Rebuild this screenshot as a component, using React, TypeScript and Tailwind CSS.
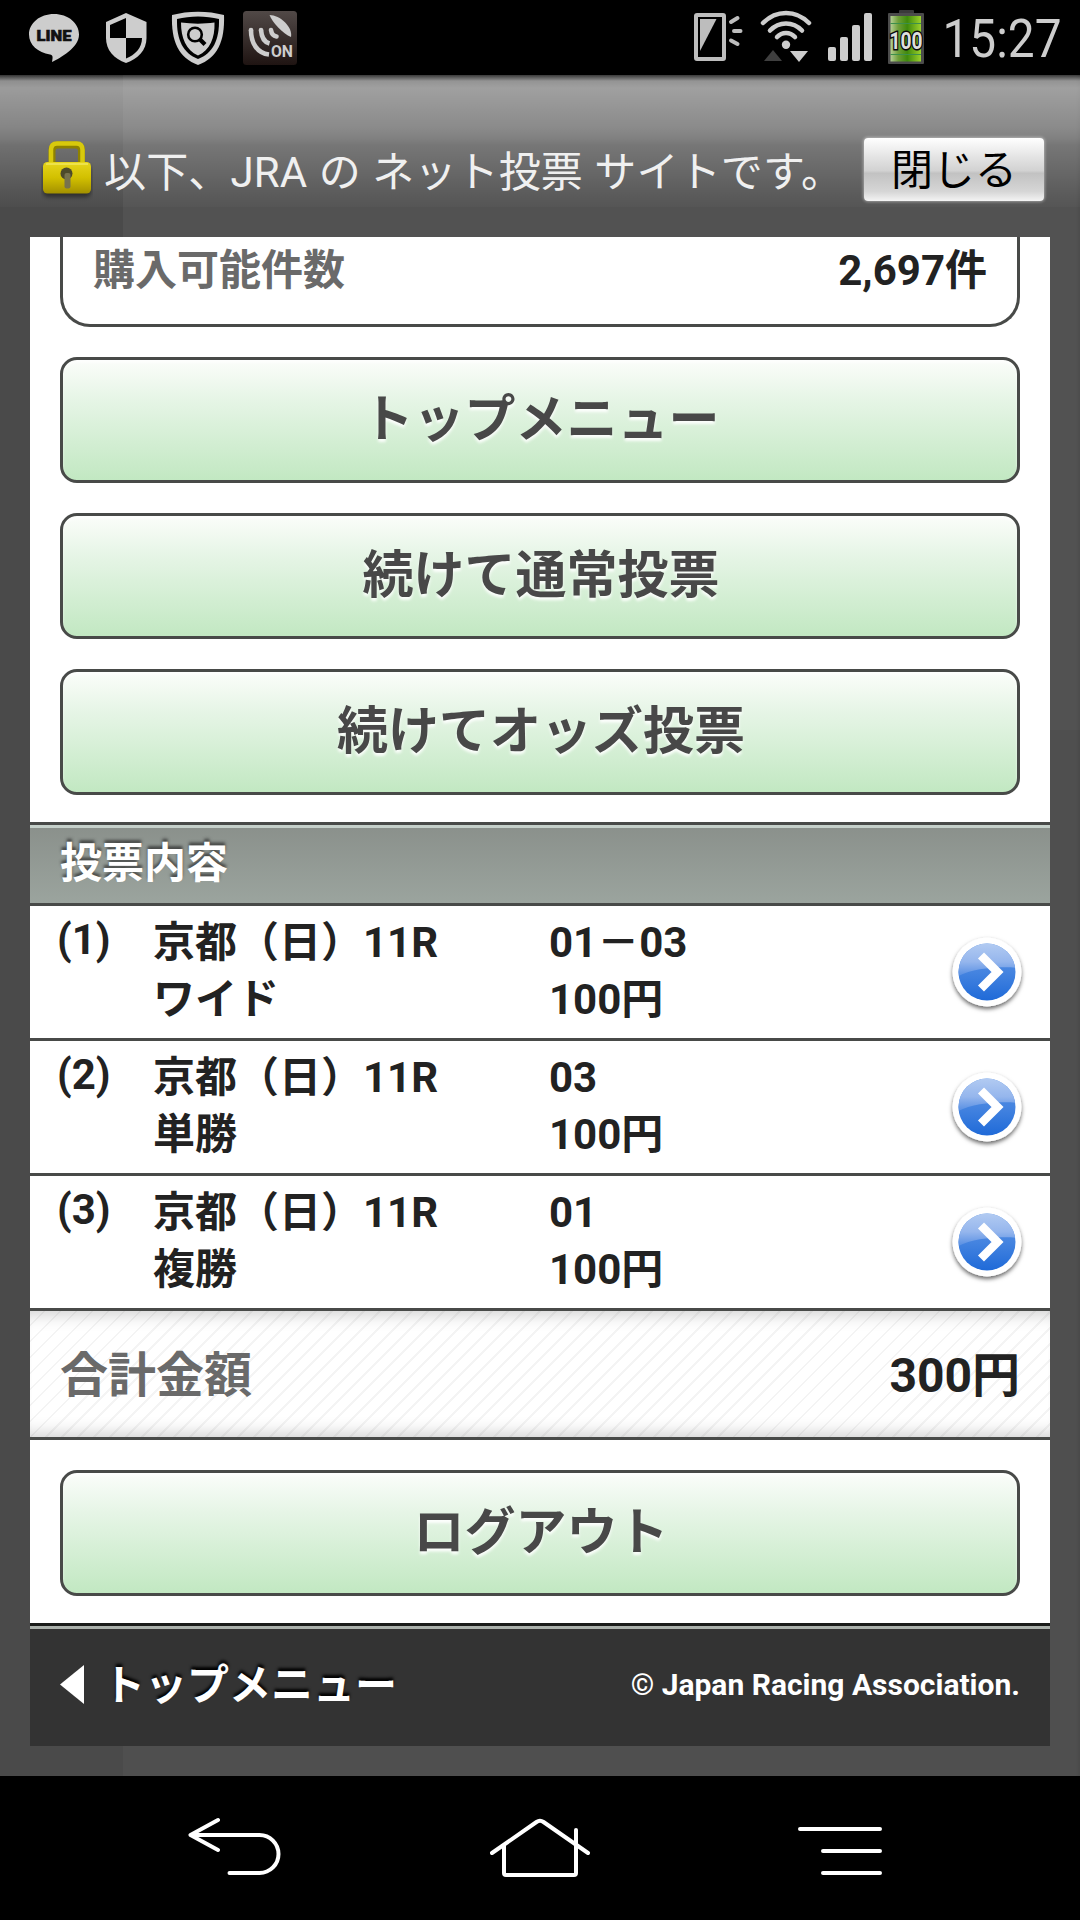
import type { ReactNode } from "react";

interface Bet {
  no: number;
  race: string;
  type: string;
  numbers: string;
  amount: string;
}

const bets: Bet[] = [
  { no: 1, race: "京都（日）11R", type: "ワイド", numbers: "01－03", amount: "100円" },
  { no: 2, race: "京都（日）11R", type: "単勝", numbers: "03", amount: "100円" },
  { no: 3, race: "京都（日）11R", type: "複勝", numbers: "01", amount: "100円" },
];

function LineIcon() {
  return (
    <svg className="h-[75px] w-[52px]" viewBox="28 0 52 75">
      <path
        fill="#cdcdcd"
        d="M54 14C40 14 29 23 29 34.500C29 45 38 52.500 50 54.500C53 55 53 57 52 62C60 58 79 48 79 34.500C79 23 68 14 54 14Z"
      />
      <text x="36.5" y="41" fontSize="15.5" fontWeight="900" fill="#111" stroke="#111" strokeWidth="0.6" textLength="35" lengthAdjust="spacingAndGlyphs">
        LINE
      </text>
    </svg>
  );
}

function ShieldIcon() {
  return (
    <svg className="h-[75px] w-[42px]" viewBox="105 0 42 75">
      <path fill="#cdcdcd" d="M126 13L146.500 22V38C146.500 50 138 59 126 63C114 59 106 50 106 38V22Z" />
      <path fill="#000" d="M126 18V38H110V25Z" />
      <path fill="#000" d="M126 38H142C142 48 135 55 126 58.500Z" />
    </svg>
  );
}

function ScanIcon() {
  return (
    <svg className="h-[75px] w-[54px]" viewBox="171 0 54 75">
      <path fill="#cdcdcd" d="M172 15C188 10.500 208 10.500 224 15C225 42 217 58 198 65C179 58 171 42 172 15Z" />
      <path fill="#000" d="M177 19C190 15.500 206 15.500 219 19C219.500 40 213 53 198 59C183 53 176.500 40 177 19Z" />
      <path fill="#cdcdcd" d="M181 22.500C192 24 204 24 214.500 22.500C215 38 210 50 198 55.500C186 50 181 38 181 22.500Z" />
      <circle cx="195" cy="34.500" r="6.800" fill="none" stroke="#000" strokeWidth="2.600" />
      <path d="M199.500 39L205 44.500" stroke="#000" strokeWidth="4.200" />
    </svg>
  );
}

function SignalOnIcon() {
  return (
    <svg className="h-[75px] w-[56px]" viewBox="242 0 56 75">
      <defs>
        <linearGradient id="tile" x1="0" y1="0" x2="0" y2="1">
          <stop offset="0" stopColor="#514947" />
          <stop offset="1" stopColor="#1f1412" />
        </linearGradient>
      </defs>
      <rect x="243" y="11" width="54" height="54" rx="3.500" fill="url(#tile)" />
      <path fill="#cdcdcd" d="M269.500 15C280 15 293 27 291 37C283 34 272 22 269.500 15Z" />
      <g fill="none" stroke="#cdcdcd" strokeWidth="4.600">
        <path d="M251 30C251 43 257 53 269 54.500" />
        <path d="M261 30C261.500 37 264 42 269.500 43.500" />
        <path d="M271 30C271.500 33.500 273 36 276.500 36.500" strokeLinecap="round" />
      </g>
      <circle cx="251" cy="30" r="2.300" fill="#cdcdcd" />
      <circle cx="261" cy="30" r="2.300" fill="#cdcdcd" />
      <text x="271" y="57" fontSize="16.500" fontWeight="700" fill="#cdcdcd" textLength="22" lengthAdjust="spacingAndGlyphs">
        ON
      </text>
    </svg>
  );
}

function PhoneGlanceIcon() {
  return (
    <svg className="h-[75px] w-[50px]" viewBox="693 0 50 75">
      <rect x="696" y="15" width="28" height="44" rx="1" fill="none" stroke="#bdbdbd" strokeWidth="4" />
      <path fill="#bdbdbd" d="M700 19H716.500L700 51Z" />
      <path d="M731 22L737.500 18M734 31H740.500M731 40.500L737.500 44" stroke="#bdbdbd" strokeWidth="4" strokeLinecap="round" />
    </svg>
  );
}

function WifiIcon() {
  return (
    <svg className="h-[75px] w-[54px]" viewBox="759 0 54 75">
      <g fill="none" stroke="#cdcdcd" strokeWidth="4.500" strokeLinecap="round">
        <path d="M763 23C776 9.500 796 9.500 809 23" />
        <path d="M770 30.500C779 21 793 21 802 30.500" />
        <path d="M777 37C782 31.500 790 31.500 795 37" />
      </g>
      <circle cx="786" cy="44.700" r="4.200" fill="#cdcdcd" />
      <path d="M764 61H782L773 50Z" fill="#3f3f3f" />
      <path d="M790 51H808L799 62Z" fill="#cdcdcd" />
    </svg>
  );
}

function SignalBars() {
  return (
    <div className="flex h-[75px] items-end gap-1 pb-[14px]">
      <span className="h-[14px] w-2 rounded-[2px] bg-[#cdcdcd]" />
      <span className="h-[24px] w-2 rounded-[2px] bg-[#cdcdcd]" />
      <span className="h-[36px] w-2 rounded-[2px] bg-[#cdcdcd]" />
      <span className="h-[48px] w-2 rounded-[2px] bg-[#cdcdcd]" />
    </div>
  );
}

function BatteryIcon() {
  return (
    <svg className="h-[75px] w-[38px] overflow-visible" viewBox="887 0 38 75">
      <defs>
        <linearGradient id="cell" x1="0" y1="0" x2="1" y2="0">
          <stop offset="0" stopColor="#b5cf95" />
          <stop offset="0.250" stopColor="#6f9f3a" />
          <stop offset="0.550" stopColor="#3f8a0c" />
          <stop offset="1" stopColor="#9bd12c" />
        </linearGradient>
      </defs>
      <rect x="899" y="10" width="15" height="5" rx="1" fill="#3a3a3a" />
      <rect x="888" y="13" width="36" height="51" rx="1" fill="#4b4b4b" />
      <rect x="890.500" y="16" width="30.500" height="45.500" fill="url(#cell)" />
      <path d="M890.500 23.500H921M890.500 54.500H921" stroke="#3c8f4c" />
      <text
        x="889.500"
        y="49"
        fontSize="24"
        fontWeight="700"
        fill="#dedede"
        stroke="#0b0b0b"
        strokeWidth="3"
        paintOrder="stroke"
        textLength="33"
        lengthAdjust="spacingAndGlyphs"
      >
        100
      </text>
    </svg>
  );
}

function LockIcon() {
  return (
    <svg className="h-[66px] w-[52px]" viewBox="41 138 52 66">
      <defs>
        <linearGradient id="lock" x1="0" y1="0" x2="0" y2="1">
          <stop offset="0" stopColor="#e6d51c" />
          <stop offset="0.500" stopColor="#d2c000" />
          <stop offset="1" stopColor="#a39000" />
        </linearGradient>
        <filter id="lockShadow" x="-20%" y="-20%" width="140%" height="150%">
          <feGaussianBlur stdDeviation="2" />
        </filter>
      </defs>
      <rect x="43" y="165" width="48" height="32" rx="5" fill="#000" opacity="0.450" filter="url(#lockShadow)" />
      <path d="M52 166V150.500Q52 145 58 145H75.500Q81.500 145 81.500 150.500V166" fill="none" stroke="#8f8200" strokeWidth="7" />
      <path d="M51 166V150Q51 143.500 57 143.500H76.500Q82.500 143.500 82.500 150V166" fill="none" stroke="#d8c90c" strokeWidth="4.500" />
      <rect x="43" y="162" width="48" height="31.500" rx="4.500" fill="url(#lock)" />
      <path d="M46 164H88" stroke="#f1e75c" strokeWidth="1.500" />
      <circle cx="66.500" cy="173.500" r="6" fill="#4d4a2a" />
      <rect x="64.500" y="173" width="6" height="15.500" rx="2" fill="#77724e" />
    </svg>
  );
}

function ArrowBadge() {
  return (
    <svg className="h-[84px] w-[84px]" viewBox="0 0 84 84">
      <defs>
        <linearGradient id="ball" x1="0" y1="0" x2="0" y2="1">
          <stop offset="0" stopColor="#5a93e4" />
          <stop offset="0.500" stopColor="#4584e0" />
          <stop offset="1" stopColor="#1f6ad8" />
        </linearGradient>
        <linearGradient id="gloss" x1="0" y1="0" x2="0" y2="1">
          <stop offset="0" stopColor="#b4ccf2" />
          <stop offset="0.550" stopColor="#95b6ed" />
          <stop offset="1" stopColor="#4d88e1" />
        </linearGradient>
        <clipPath id="disc">
          <circle cx="42" cy="42" r="28.500" />
        </clipPath>
        <filter id="drop" x="-20%" y="-20%" width="140%" height="150%">
          <feDropShadow dx="0" dy="2.500" stdDeviation="2.300" floodColor="#000" floodOpacity="0.600" />
        </filter>
      </defs>
      <circle cx="42" cy="42" r="34.500" fill="#fff" filter="url(#drop)" />
      <circle cx="42" cy="42" r="28.500" fill="url(#ball)" />
      <path clipPath="url(#disc)" fill="url(#gloss)" d="M10 12H74V38C54 36 26 38 10 48Z" />
      <path d="M36 25.500L52.500 42L36 58.500" fill="none" stroke="#fff" strokeWidth="8.500" />
    </svg>
  );
}

function StatusBar() {
  return (
    <div className="flex h-[75px] shrink-0 items-center bg-black pr-[15px] pl-7">
      <LineIcon />
      <div className="w-[25px]" />
      <ShieldIcon />
      <div className="w-6" />
      <ScanIcon />
      <div className="w-[17px]" />
      <SignalOnIcon />
      <div className="flex-1" />
      <PhoneGlanceIcon />
      <div className="w-4" />
      <WifiIcon />
      <div className="w-[15px]" />
      <SignalBars />
      <div className="w-[15px]" />
      <BatteryIcon />
      <div className="w-[14px]" />
      <svg className="h-[75px] w-[126px]" viewBox="0 0 126 75">
        <text x="3.500" y="57" fontSize="54" fill="#cdcdcd" textLength="119" lengthAdjust="spacingAndGlyphs">
          15:27
        </text>
      </svg>
    </div>
  );
}

function SiteBanner() {
  return (
    <div className="flex h-[132px] shrink-0 items-end bg-[linear-gradient(to_bottom,rgba(0,0,0,0.300)_0px,rgba(255,255,255,0.380)_6px,rgba(255,255,255,0.450)_13px,rgba(255,255,255,0.330)_52px,rgba(255,255,255,0.270)_63px,rgba(255,255,255,0.210)_70px,rgba(255,255,255,0.050)_120px,rgba(255,255,255,0.020)_132px)] pr-9 pl-[41px]">
      <div className="mb-[3px]">
        <LockIcon />
      </div>
      <div className="mb-[3px] ml-[11px] flex-1 text-[42px] leading-[62px] tracking-[0.15px] whitespace-nowrap text-[#f0f0f0] [word-spacing:0.8px]">
        以下、JRA の ネット投票 サイトです。
      </div>
      <button
        type="button"
        className="mb-[6px] h-[63px] w-[180px] rounded-[4px] bg-[linear-gradient(to_bottom,#ffffff_0%,#e4e4e4_30%,#d2d2d2_52%,#c2c2c2_56%,#d6d6d6_85%,#f4f4f4_100%)] pt-[3px] text-[42px] leading-[60px] text-black shadow-[0_0_3px_1px_rgba(255,255,255,0.400)]"
      >
        閉じる
      </button>
    </div>
  );
}

function MenuButton({ children }: { children: ReactNode }) {
  return (
    <button
      type="button"
      className="mx-[30px] block h-[126px] rounded-[17px] border-[3px] border-[#484a48] bg-[linear-gradient(to_bottom,#fbfdfa_0%,#e6f5e6_33%,#c2e8c2_100%)] pl-[2px] text-[51px] leading-[118px] font-bold text-[#484848] shadow-[inset_0_3px_3px_rgba(255,255,255,0.600)] [text-shadow:0_3px_3px_rgba(255,255,255,0.900)]"
    >
      {children}
    </button>
  );
}

function BetRow({ bet }: { bet: Bet }) {
  return (
    <div className="flex h-[135px] items-start border-b-[3px] border-[#484a48] pr-[21px] pl-[27px] text-[42px] leading-[57px] font-bold text-[#222]">
      <div className="w-[96px] pt-[5px]">({bet.no})</div>
      <div className="w-[396px] pt-[8px]">
        <div>{bet.race}</div>
        <div>{bet.type}</div>
      </div>
      <div className="flex-1 pt-[8px]">
        <div>{bet.numbers}</div>
        <div>{bet.amount}</div>
      </div>
      <div className="pt-6">
        <ArrowBadge />
      </div>
    </div>
  );
}

function NavBar() {
  return (
    <div className="flex h-[144px] shrink-0 items-center bg-black pr-[194px] pl-[184px]">
      <svg className="h-[72px] w-[100px]" viewBox="184 1812 100 72" fill="none" stroke="#fff" strokeWidth="4" strokeLinecap="round" strokeLinejoin="round">
        <path d="M218 1820L190.500 1835L218 1850M190.500 1835H259.500A19 19 0 0 1 259.500 1873H229.500" />
      </svg>
      <div className="w-[204px]" />
      <svg className="h-[72px] w-[104px]" viewBox="488 1812 104 72" fill="none" stroke="#fff" strokeWidth="4" strokeLinecap="round" strokeLinejoin="round">
        <path d="M492 1853L536.500 1822Q540 1819.500 543.500 1822L588 1853M504 1846V1873Q504 1875 506 1875H574Q576 1875 576 1873V1830" />
      </svg>
      <div className="flex-1" />
      <svg className="h-[72px] w-[92px]" viewBox="794 1812 92 72" fill="none" stroke="#fff" strokeWidth="4" strokeLinecap="round">
        <path d="M800 1829H880M823 1851H880M823 1873H880" />
      </svg>
    </div>
  );
}

export default function App() {
  return (
    <div className="flex h-[1920px] w-[1080px] flex-col overflow-hidden [background:linear-gradient(rgba(0,0,0,0.040),rgba(0,0,0,0.040))_right_bottom/957px_1190px_no-repeat,linear-gradient(to_right,#4a4a4a_0px,#4a4a4a_123px,#525252_123px,#525252_1076px,#4c4c4c_1080px)] font-['Roboto','Noto_Sans_CJK_JP',sans-serif]">
      <StatusBar />
      <SiteBanner />
      <div className="mx-[30px] mt-[30px] flex h-[1509px] flex-col overflow-hidden bg-white">
        <div className="mx-[30px] flex h-[90px] items-start justify-between rounded-b-[30px] border-[3px] border-t-0 border-[#484a48] px-[30px] pt-[3px] text-[42px] leading-[62px] font-bold">
          <span className="text-[#6a6a6a]">購入可能件数</span>
          <span className="text-[#222]">2,697件</span>
        </div>
        <div className="flex flex-col gap-[30px] pt-[30px] pb-[27px]">
          <MenuButton>トップメニュー</MenuButton>
          <MenuButton>続けて通常投票</MenuButton>
          <MenuButton>続けてオッズ投票</MenuButton>
        </div>
        <div className="h-[84px] shrink-0 border-y-[3px] border-[#484a48] bg-[linear-gradient(to_bottom,#8a908b,#9ba49e)] pl-[30px] text-[42px] leading-[78px] font-bold text-white shadow-[inset_0_3px_0_#c5d0ca] [text-shadow:0_-3px_3px_rgba(40,40,40,0.700)]">
          投票内容
        </div>
        {bets.map((bet) => (
          <BetRow key={bet.no} bet={bet} />
        ))}
        <div className="flex h-[129px] shrink-0 items-center justify-between border-b-[3px] border-[#484a48] bg-[repeating-linear-gradient(135deg,transparent_0px,transparent_9.3px,rgba(0,0,0,0.045)_9.3px,rgba(0,0,0,0.045)_11.3px)] px-[30px] pt-[3px] text-[48px] font-bold shadow-[inset_0_18px_18px_-16px_rgba(0,0,0,0.220),inset_0_-18px_18px_-16px_rgba(0,0,0,0.220)]">
          <span className="text-[#6a6a6a]">合計金額</span>
          <span className="text-[#222]">300円</span>
        </div>
        <div className="flex flex-col pt-[30px] pb-[27px]">
          <MenuButton>ログアウト</MenuButton>
        </div>
        <div className="flex h-[123px] items-center justify-between border-t-[3px] border-[#1a1c1a] bg-[#333] px-[30px] pb-[3px] font-bold text-white shadow-[inset_0_3px_0_#abb1ac]">
          <div className="flex items-center gap-[19px] text-[42px] leading-[62px] [text-shadow:0_-3px_3px_#000]">
            <svg className="h-[39px] w-[24px]" viewBox="0 0 24 39">
              <path d="M24 0V39L0 19.500Z" fill="#fff" />
            </svg>
            <span className="pt-[2px]">トップメニュー</span>
          </div>
          <div className="text-[30px]">© Japan Racing Association.</div>
        </div>
      </div>
      <div className="h-[30px] shrink-0" />
      <NavBar />
    </div>
  );
}
